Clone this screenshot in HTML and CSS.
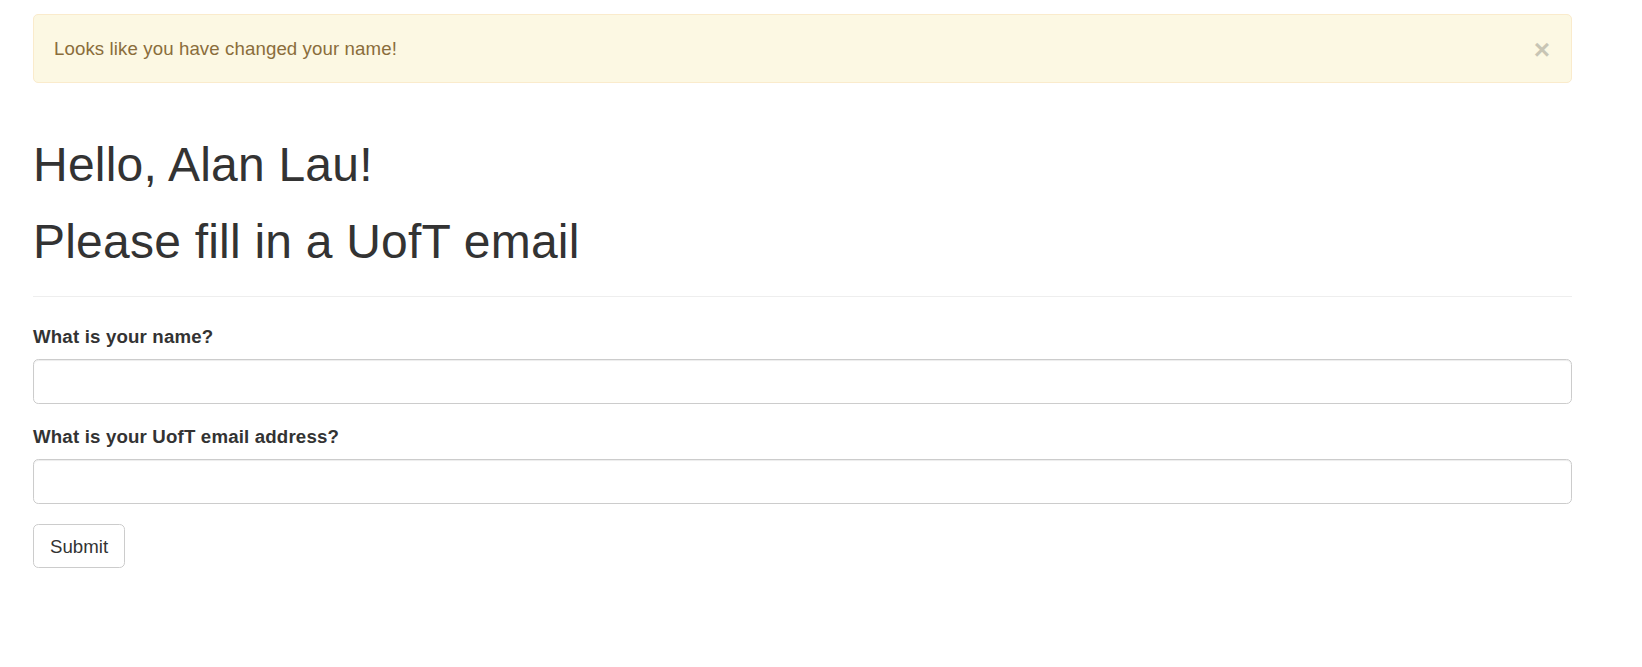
FILE: index.html
```html
<!DOCTYPE html>
<html lang="en">
<head>
<meta charset="utf-8">
<title>Flasky</title>
<link rel="stylesheet" href="styles.css">
</head>
<body>
<div class="page">
  <div class="alert">
    <button type="button" class="close" aria-label="Close">&times;</button>
    Looks like you have changed your name!
  </div>
  <div class="page-header">
    <h1 class="title">Hello, Alan Lau!</h1>
    <h1 class="title title-second">Please fill in a UofT email</h1>
  </div>
  <form class="form">
    <div class="form-group">
      <label class="control-label" for="name">What is your name?</label>
      <input class="form-control" id="name" type="text">
    </div>
    <div class="form-group">
      <label class="control-label" for="email">What is your UofT email address?</label>
      <input class="form-control" id="email" type="text">
    </div>
    <button class="btn" type="submit">Submit</button>
  </form>
</div>
</body>
</html>
```

FILE: styles.css
```css
* { box-sizing: border-box; }
html, body { margin: 0; padding: 0; background: #fff; }
body {
  font-family: "Liberation Sans", Arial, Helvetica, sans-serif;
  font-size: 18.67px;
  line-height: 26.67px;
  color: #333;
  letter-spacing: 0.1px;
}
.page {
  padding: 14px 70px 0 33px;
}
.alert {
  position: relative;
  padding: 21px 62px 19px 20px;
  border: 1px solid #faebcc;
  border-radius: 5px;
  background: #fcf8e3;
  color: #8a6d3b;
  margin-bottom: 0;
}
.close {
  position: absolute;
  right: 21px;
  top: 21px;
  padding: 0;
  border: 0;
  background: transparent;
  font-family: "Liberation Sans", Arial, sans-serif;
  font-size: 28px;
  font-weight: bold;
  line-height: 28px;
  color: #000;
  opacity: 0.2;
  cursor: pointer;
}
.page-header {
  margin-top: 56px;
  border-bottom: 1px solid #eee;
  padding-bottom: 27px;
  margin-bottom: 27px;
}
.title {
  margin: 0;
  font-size: 48px;
  line-height: 52.8px;
  font-weight: 500;
  color: #333;
  letter-spacing: 0.22px;
}
.title-second {
  margin-top: 25px;
}
.form-group {
  margin-bottom: 20px;
}
.control-label {
  display: block;
  font-weight: bold;
  margin-bottom: 8px;
  letter-spacing: 0.17px;
}
.form-control {
  display: block;
  width: 100%;
  height: 45.33px;
  padding: 8px 16px;
  border: 1px solid #ccc;
  border-radius: 5.33px;
  box-shadow: inset 0 1px 1px rgba(0,0,0,.075);
  font-family: inherit;
  font-size: 18.67px;
  color: #555;
  background: #fff;
}
.btn {
  display: inline-block;
  height: 44px;
  padding: 8px 16px 7px;
  border: 1px solid #ccc;
  border-radius: 5.33px;
  background: #fff;
  font-family: inherit;
  font-size: 18.67px;
  line-height: 27px;
  color: #333;
  cursor: pointer;
}
```
